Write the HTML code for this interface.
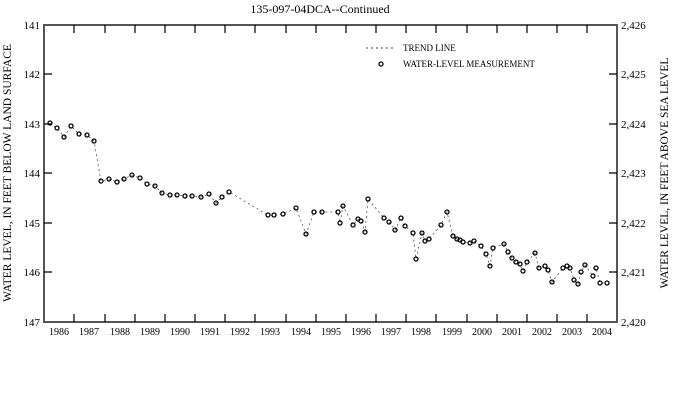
<!DOCTYPE html>
<html><head><style>html,body{margin:0;padding:0;background:#fff}svg{display:block}text{font-family:"Liberation Serif",serif;fill:#000}</style></head><body>
<svg width="673" height="406" viewBox="0 0 673 406" xmlns="http://www.w3.org/2000/svg">
<text x="320" y="13" font-size="12" text-anchor="middle">135-097-04DCA--Continued</text>
<rect x="44" y="25" width="573" height="297" fill="none" stroke="#555" stroke-width="2"/>
<g stroke="#000" stroke-width="1.2" id="ticks">
<path d="M74,25v8M105,25v8M135,25v8M165,25v8M195,25v8M225,25v8M255,25v8M286,25v8M316,25v8M346,25v8M376,25v8M406,25v8M436,25v8M467,25v8M497,25v8M527,25v8M557,25v8M587,25v8"/>
<path d="M74,322v-8M105,322v-8M135,322v-8M165,322v-8M195,322v-8M225,322v-8M255,322v-8M286,322v-8M316,322v-8M346,322v-8M376,322v-8M406,322v-8M436,322v-8M467,322v-8M497,322v-8M527,322v-8M557,322v-8M587,322v-8"/>
<path d="M44,74h8M44,124h8M44,173h8M44,223h8M44,272h8M617,74h-8M617,124h-8M617,173h-8M617,223h-8M617,272h-8"/>
</g>
<g font-size="11" text-anchor="end">
<text x="40" y="29">141</text><text x="40" y="78">142</text><text x="40" y="128">143</text><text x="40" y="177">144</text><text x="40" y="227">145</text><text x="40" y="276">146</text><text x="40" y="326">147</text>
</g>
<g font-size="11">
<text x="621" y="29">2,426</text><text x="621" y="78">2,425</text><text x="621" y="128">2,424</text><text x="621" y="177">2,423</text><text x="621" y="227">2,422</text><text x="621" y="276">2,421</text><text x="621" y="326">2,420</text>
</g>
<g font-size="10" text-anchor="middle">
<text x="59" y="335">1986</text><text x="89" y="335">1987</text><text x="120" y="335">1988</text><text x="150" y="335">1989</text><text x="180" y="335">1990</text><text x="210" y="335">1991</text><text x="240" y="335">1992</text><text x="270" y="335">1993</text><text x="301" y="335">1994</text><text x="331" y="335">1995</text><text x="361" y="335">1996</text><text x="391" y="335">1997</text><text x="421" y="335">1998</text><text x="452" y="335">1999</text><text x="482" y="335">2000</text><text x="512" y="335">2001</text><text x="542" y="335">2002</text><text x="572" y="335">2003</text><text x="602" y="335">2004</text>
</g>
<text transform="translate(11,173) rotate(-90)" font-size="11.5" text-anchor="middle">WATER LEVEL, IN FEET BELOW LAND SURFACE</text>
<text transform="translate(668,173) rotate(-90)" font-size="11.5" text-anchor="middle">WATER LEVEL, IN FEET ABOVE SEA LEVEL</text>
<line x1="366" y1="48" x2="396" y2="48" stroke="#444" stroke-dasharray="2,3"/>
<text x="403" y="51" font-size="9">TREND LINE</text>
<circle cx="381" cy="64" r="2" fill="none" stroke="#000" stroke-width="1.3"/>
<text x="403" y="67" font-size="9">WATER-LEVEL MEASUREMENT</text>
<polyline fill="none" stroke="#555" stroke-dasharray="2,3" stroke-width="0.8" points="50,123 57,128 64,137 71,126 79,134 87,135 94,141 101,181 109,179 117,182 124,179 132,175 140,178 147,184 155,186 162,193 170,195 177,195 185,196 192,196 201,197 209,194 216,203 222,197 229,192 268,215 274,215 283,214 296,208 306,234 314,212 322,212 338,212 340,223 343,206 353,225 358,219 361,221 365,232 368,199 384,218 389,222 395,230 401,218 405,226 413,233 416,259 422,233 425,241 429,239 441,225 447,212 453,236 457,239 460,240 463,242 470,243 474,241 481,246 486,254 490,266 493,248 504,244 508,252 512,258 516,262 520,264 523,271 527,262 535,253 539,268 545,266 548,270 552,282 563,268 567,266 570,268 574,280 578,284 581,272 585,265 593,276 596,268 600,283 607,283"/>
<g fill="none" stroke="#000" stroke-width="1.3">
<circle cx="50" cy="123" r="2"/><circle cx="57" cy="128" r="2"/><circle cx="64" cy="137" r="2"/><circle cx="71" cy="126" r="2"/><circle cx="79" cy="134" r="2"/><circle cx="87" cy="135" r="2"/><circle cx="94" cy="141" r="2"/><circle cx="101" cy="181" r="2"/><circle cx="109" cy="179" r="2"/><circle cx="117" cy="182" r="2"/><circle cx="124" cy="179" r="2"/><circle cx="132" cy="175" r="2"/><circle cx="140" cy="178" r="2"/><circle cx="147" cy="184" r="2"/><circle cx="155" cy="186" r="2"/><circle cx="162" cy="193" r="2"/><circle cx="170" cy="195" r="2"/><circle cx="177" cy="195" r="2"/><circle cx="185" cy="196" r="2"/><circle cx="192" cy="196" r="2"/><circle cx="201" cy="197" r="2"/><circle cx="209" cy="194" r="2"/><circle cx="216" cy="203" r="2"/><circle cx="222" cy="197" r="2"/><circle cx="229" cy="192" r="2"/><circle cx="268" cy="215" r="2"/><circle cx="274" cy="215" r="2"/><circle cx="283" cy="214" r="2"/><circle cx="296" cy="208" r="2"/><circle cx="306" cy="234" r="2"/><circle cx="314" cy="212" r="2"/><circle cx="322" cy="212" r="2"/><circle cx="338" cy="212" r="2"/><circle cx="340" cy="223" r="2"/><circle cx="343" cy="206" r="2"/><circle cx="353" cy="225" r="2"/><circle cx="358" cy="219" r="2"/><circle cx="361" cy="221" r="2"/><circle cx="365" cy="232" r="2"/><circle cx="368" cy="199" r="2"/><circle cx="384" cy="218" r="2"/><circle cx="389" cy="222" r="2"/><circle cx="395" cy="230" r="2"/><circle cx="401" cy="218" r="2"/><circle cx="405" cy="226" r="2"/><circle cx="413" cy="233" r="2"/><circle cx="416" cy="259" r="2"/><circle cx="422" cy="233" r="2"/><circle cx="425" cy="241" r="2"/><circle cx="429" cy="239" r="2"/><circle cx="441" cy="225" r="2"/><circle cx="447" cy="212" r="2"/><circle cx="453" cy="236" r="2"/><circle cx="457" cy="239" r="2"/><circle cx="460" cy="240" r="2"/><circle cx="463" cy="242" r="2"/><circle cx="470" cy="243" r="2"/><circle cx="474" cy="241" r="2"/><circle cx="481" cy="246" r="2"/><circle cx="486" cy="254" r="2"/><circle cx="490" cy="266" r="2"/><circle cx="493" cy="248" r="2"/><circle cx="504" cy="244" r="2"/><circle cx="508" cy="252" r="2"/><circle cx="512" cy="258" r="2"/><circle cx="516" cy="262" r="2"/><circle cx="520" cy="264" r="2"/><circle cx="523" cy="271" r="2"/><circle cx="527" cy="262" r="2"/><circle cx="535" cy="253" r="2"/><circle cx="539" cy="268" r="2"/><circle cx="545" cy="266" r="2"/><circle cx="548" cy="270" r="2"/><circle cx="552" cy="282" r="2"/><circle cx="563" cy="268" r="2"/><circle cx="567" cy="266" r="2"/><circle cx="570" cy="268" r="2"/><circle cx="574" cy="280" r="2"/><circle cx="578" cy="284" r="2"/><circle cx="581" cy="272" r="2"/><circle cx="585" cy="265" r="2"/><circle cx="593" cy="276" r="2"/><circle cx="596" cy="268" r="2"/><circle cx="600" cy="283" r="2"/><circle cx="607" cy="283" r="2"/>
</g>
</svg>
</body></html>
